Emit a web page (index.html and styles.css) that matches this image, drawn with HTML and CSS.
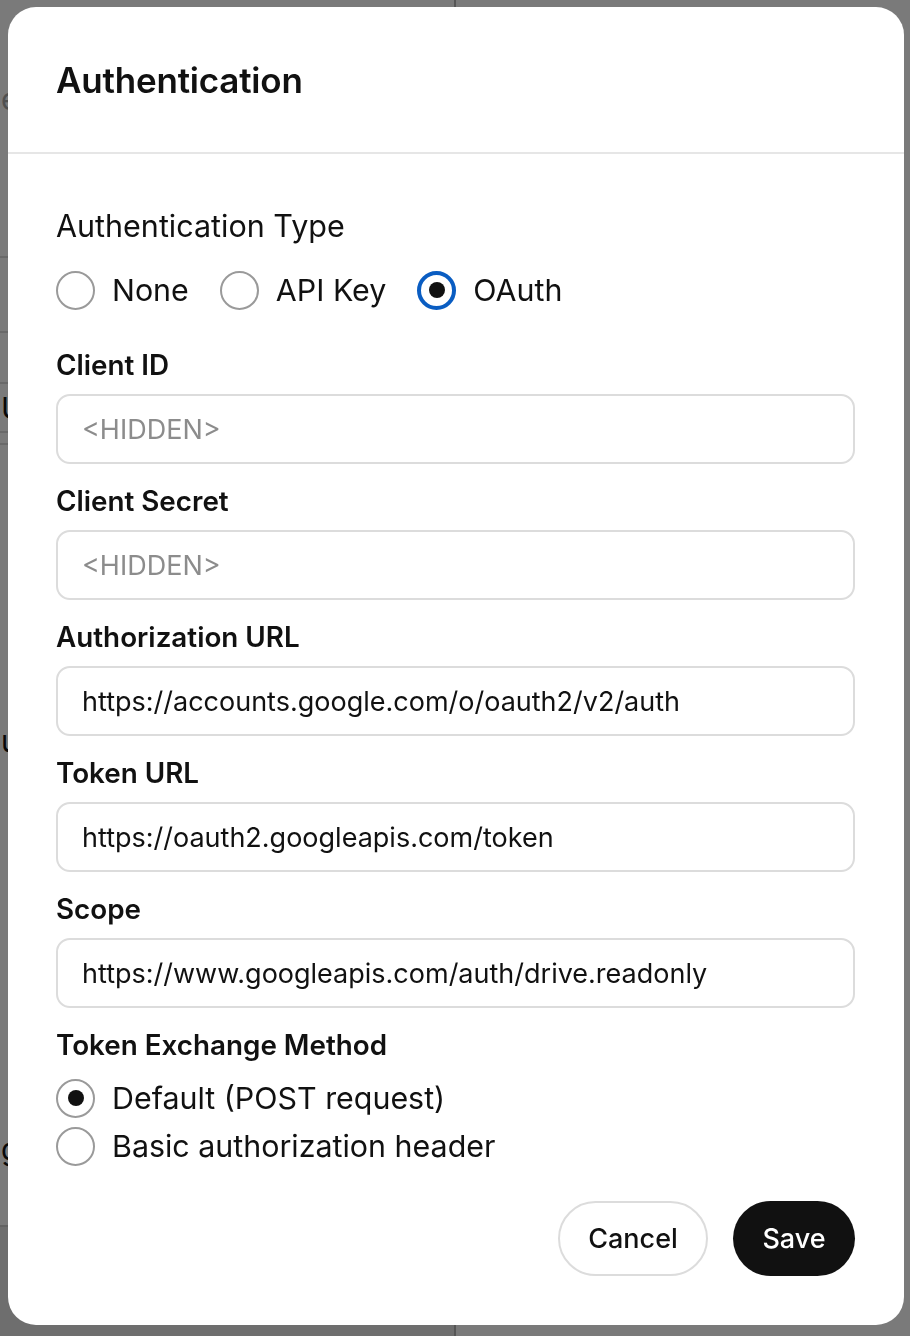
FILE: index.html
```html
<!DOCTYPE html>
<html lang="en">
<head>
<meta charset="utf-8">
<title>Authentication</title>
<link rel="stylesheet" href="styles.css">
</head>
<body>
<div class="behind">
  <div class="bcol bleft">
    <div class="brow r1"><span class="faint">e</span></div>
    <div class="brow r2"></div>
    <div class="brow r3"></div>
    <div class="brow r4"><span>U</span></div>
    <div class="brow r5"></div>
    <div class="brow r6"><span class="bu">u</span><span class="ul">g</span></div>
    <div class="brow r8"></div>
  </div>
  <div class="bcol bright">
    <div class="bspacer"></div>
    <div class="bm">M</div>
  </div>
</div>
<div class="overlay"></div>

<div class="modal" role="dialog" aria-labelledby="dlg-title">
  <div class="modal-header">
    <h1 id="dlg-title" class="title">Authentication</h1>
  </div>
  <div class="modal-body">
    <div class="section-title">Authentication Type</div>
    <div class="radio-row">
      <label class="radio"><span class="dot"></span><span class="rlabel">None</span></label>
      <label class="radio"><span class="dot"></span><span class="rlabel">API Key</span></label>
      <label class="radio"><span class="dot on blue"></span><span class="rlabel">OAuth</span></label>
    </div>

    <div class="fields">
      <div class="field">
        <div class="flabel">Client ID</div>
        <div class="input placeholder">&lt;HIDDEN&gt;</div>
      </div>
      <div class="field">
        <div class="flabel">Client Secret</div>
        <div class="input placeholder">&lt;HIDDEN&gt;</div>
      </div>
      <div class="field">
        <div class="flabel">Authorization URL</div>
        <div class="input">https://accounts.google.com/o/oauth2/v2/auth</div>
      </div>
      <div class="field">
        <div class="flabel">Token URL</div>
        <div class="input">https://oauth2.googleapis.com/token</div>
      </div>
      <div class="field">
        <div class="flabel">Scope</div>
        <div class="input">https://www.googleapis.com/auth/drive.readonly</div>
      </div>
      <div class="field">
        <div class="flabel">Token Exchange Method</div>
        <div class="radio-col">
          <label class="radio"><span class="dot on"></span><span class="rlabel">Default (POST request)</span></label>
          <label class="radio"><span class="dot"></span><span class="rlabel">Basic authorization header</span></label>
        </div>
      </div>
    </div>

    <div class="actions">
      <button class="btn btn-outline">Cancel</button>
      <button class="btn btn-dark">Save</button>
    </div>
  </div>
</div>
</body>
</html>
```

FILE: styles.css
```css
* { box-sizing: border-box; }

html, body {
  margin: 0;
  padding: 0;
  width: 910px;
  height: 1336px;
  overflow: hidden;
}

body {
  background: #ffffff;
  font-family: Inter, "Noto Sans", "Liberation Sans", sans-serif;
  color: #111111;
}

/* page behind the dialog */
.behind {
  display: flex;
  width: 910px;
  height: 1336px;
}

.bcol {
  display: flex;
  flex-direction: column;
}

.bleft {
  width: 456px;
  border-right: 2px solid #b4b4b4;
}

.bright {
  flex: 1;
}

.brow {
  display: flex;
  align-items: center;
  font-size: 30px;
  color: #111;
  border-bottom: 2px solid #dcdcdc;
  padding-left: 1px;
}

.brow .faint { color: #a8a8a8; }
.brow .ul { text-decoration: underline; }

.r1 { height: 258px; padding-bottom: 58px; }
.r2 { height: 75px; }
.r3 { height: 51px; }
.r4 { height: 49px; }
.r5 { height: 12px; }
.r6 {
  height: 780px;
  flex-direction: column;
  align-items: flex-start;
  padding-top: 278px;
  gap: 372px;
  border-bottom: none;
}
.r8 { flex: 1; background: #e6e6e6; border-top: 2px solid #cfcfcf; border-bottom: none; }

.bspacer { height: 1270px; }
.bm { font-size: 30px; padding-left: 40px; }

.overlay {
  position: fixed;
  inset: 0;
  background: rgba(0, 0, 0, 0.52);
}

/* dialog */
.modal {
  position: fixed;
  left: 8px;
  top: 7px;
  width: 896px;
  background: #ffffff;
  border-radius: 28px;
  overflow: hidden;
}

.modal-header {
  height: 147px;
  padding: 0 48px;
  display: flex;
  align-items: center;
  border-bottom: 2px solid #e6e6e6;
}

.title {
  margin: 0;
  font-size: 35px;
  font-weight: 600;
  letter-spacing: -0.2px;
  color: #111;
}

.modal-body {
  padding: 52px 49px 49px 48px;
  display: flex;
  flex-direction: column;
}

.section-title {
  height: 40px;
  line-height: 40px;
  font-size: 30.5px;
  font-weight: 400;
  color: #111;
}

.radio-row {
  margin-top: 24px;
  display: flex;
  gap: 31px;
}

.radio {
  display: flex;
  align-items: center;
  gap: 17px;
  height: 40px;
}

.dot {
  width: 39px;
  height: 39px;
  border-radius: 50%;
  border: 2px solid #9a9a9a;
  display: flex;
  align-items: center;
  justify-content: center;
  flex: none;
}

.dot.on::after {
  content: "";
  width: 16px;
  height: 16px;
  border-radius: 50%;
  background: #111;
}

.dot.blue {
  border: 4px solid #0a5dc2;
}

.rlabel {
  font-size: 30.4px;
  color: #111;
}

.fields {
  margin-top: 37px;
  display: flex;
  flex-direction: column;
  gap: 19px;
}

.field {
  display: flex;
  flex-direction: column;
}

.flabel {
  height: 36px;
  line-height: 36px;
  font-size: 27.8px;
  font-weight: 600;
  color: #111;
}

.input {
  margin-top: 11px;
  height: 70px;
  border: 2px solid #dcdcdc;
  border-radius: 14px;
  padding: 0 24px;
  display: flex;
  align-items: center;
  font-size: 27px;
  color: #111;
}

.input.placeholder {
  color: #8c8c8c;
}

.radio-col {
  margin-top: 15px;
  display: flex;
  flex-direction: column;
  gap: 8px;
}

.actions {
  margin-top: 35px;
  display: flex;
  justify-content: flex-end;
  gap: 25px;
}

.btn {
  height: 75px;
  border-radius: 38px;
  font-family: inherit;
  font-size: 27px;
  font-weight: 500;
  padding: 0;
  cursor: pointer;
}

.btn-outline {
  width: 150px;
  background: #fff;
  border: 2px solid #dcdcdc;
  color: #111;
}

.btn-dark {
  width: 122px;
  background: #111;
  border: none;
  color: #fff;
}
```
